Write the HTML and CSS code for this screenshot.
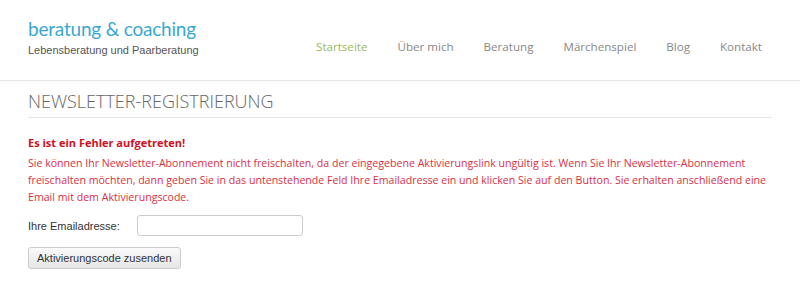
FILE: index.html
```html
<!DOCTYPE html>
<html lang="de">
<head>
    <meta charset="UTF-8">
    <title>Newsletter-Registrierung</title>
    <link rel="stylesheet" href="styles.css">
</head>
<body>
    <header class="site-header">
        <div class="brand">
            <div class="brand-name">beratung &amp; coaching</div>
            <div class="brand-sub">Lebensberatung und Paarberatung</div>
        </div>
        <nav class="main-nav">
            <a href="#" class="active">Startseite</a>
            <a href="#">Über mich</a>
            <a href="#">Beratung</a>
            <a href="#">Märchenspiel</a>
            <a href="#">Blog</a>
            <a href="#">Kontakt</a>
        </nav>
    </header>

    <main class="content">
        <h1 class="page-title">NEWSLETTER-REGISTRIERUNG</h1>
        <p class="error-title">Es ist ein Fehler aufgetreten!</p>
        <p class="error-text">Sie können Ihr Newsletter-Abonnement nicht freischalten, da der eingegebene Aktivierungslink ungültig ist. Wenn Sie Ihr Newsletter-Abonnement freischalten möchten, dann geben Sie in das untenstehende Feld Ihre Emailadresse ein und klicken Sie auf den Button. Sie erhalten anschließend eine Email mit dem Aktivierungscode.</p>

        <form class="newsletter-form">
            <div class="form-row">
                <label for="email">Ihre Emailadresse:</label>
                <input type="text" id="email">
            </div>
            <button type="button" class="btn">Aktivierungscode zusenden</button>
        </form>
    </main>
</body>
</html>
```

FILE: styles.css
```css
body {
    margin: 0;
    background-color: #fff;
    font-family: "Open Sans", Arial, sans-serif;
    color: #333;
}

.site-header {
    display: flex;
    justify-content: space-between;
    align-items: flex-start;
    height: 80px;
    padding: 0 38px 0 28px;
    border-bottom: 1px solid #e6e6e6;
    box-shadow: 0 1px 2px rgba(0, 0, 0, 0.04);
}

.brand {
    padding-top: 17px;
}

.brand-name {
    font-family: Lato, "Open Sans", sans-serif;
    font-size: 19px;
    line-height: 24px;
    color: #3aa7d2;
    letter-spacing: -0.2px;
}

.brand-sub {
    font-family: "Liberation Sans", Arial, sans-serif;
    font-size: 11px;
    line-height: 14px;
    color: #555;
    margin-top: 2px;
}

.main-nav {
    display: flex;
    gap: 30px;
    padding-top: 38px;
}

.main-nav a {
    font-size: 11.6px;
    line-height: 18px;
    color: #888;
    text-decoration: none;
}

.main-nav a.active {
    color: #9bb85c;
}

.content {
    padding: 0 28px;
}

.page-title {
    font-size: 18px;
    font-weight: 300;
    color: #666;
    margin: 11px 0 0;
    padding-bottom: 7px;
    line-height: 18px;
    border-bottom: 1px solid #e6e6e6;
}

.error-title {
    font-size: 11px;
    font-weight: bold;
    color: #cc1122;
    margin: 16px 0 0;
    line-height: 17px;
}

.error-text {
    font-size: 10.6px;
    line-height: 17px;
    color: #d8303f;
    margin: 4px 0 0;
}

.newsletter-form {
    margin-top: 9px;
}

.form-row {
    display: flex;
    align-items: center;
}

.form-row label {
    flex: 0 0 109px;
    white-space: nowrap;
    font-family: "Liberation Sans", Arial, sans-serif;
    font-size: 11px;
    color: #333;
}

.form-row input {
    width: 160px;
    height: 17px;
    border: 1px solid #ccc;
    border-radius: 3px;
    padding: 1px 2px;
}

.btn {
    margin-top: 11px;
    height: 22px;
    padding: 0 8px;
    font-family: "Liberation Sans", Arial, sans-serif;
    font-size: 11px;
    color: #333;
    border: 1px solid #ccc;
    border-radius: 3px;
    background: linear-gradient(#fafafa, #e6e6e6);
}
```
